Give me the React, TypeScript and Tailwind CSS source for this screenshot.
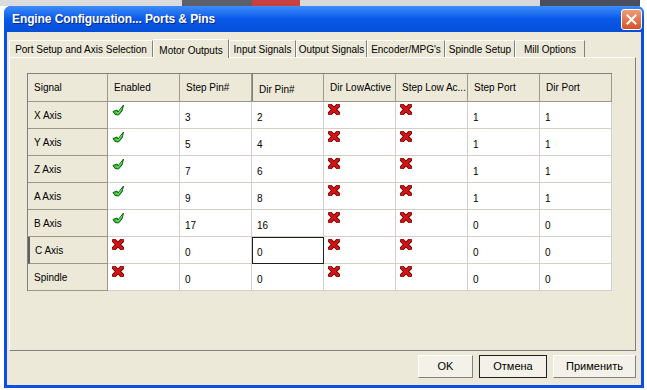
import { FC } from "react";

const tabs = [
	{ label: "Port Setup and Axis Selection", w: "w-[144px]" },
	{ label: "Motor Outputs", w: "w-[76px]", active: true },
	{ label: "Input Signals", w: "w-[67px]" },
	{ label: "Output Signals", w: "w-[71px]" },
	{ label: "Encoder/MPG's", w: "w-[78px]" },
	{ label: "Spindle Setup", w: "w-[70px]" },
	{ label: "Mill Options", w: "w-[70px]" },
];

const headers = [
	"Signal",
	"Enabled",
	"Step Pin#",
	"Dir Pin#",
	"Dir LowActive",
	"Step Low Ac...",
	"Step Port",
	"Dir Port",
];

type Row = [string, boolean, string, string, boolean, boolean, string, string];

const rows: Row[] = [
	["X Axis", true, "3", "2", false, false, "1", "1"],
	["Y Axis", true, "5", "4", false, false, "1", "1"],
	["Z Axis", true, "7", "6", false, false, "1", "1"],
	["A Axis", true, "9", "8", false, false, "1", "1"],
	["B Axis", true, "17", "16", false, false, "0", "0"],
	["C Axis", false, "0", "0", false, false, "0", "0"],
	["Spindle", false, "0", "0", false, false, "0", "0"],
];

// green "enabled" flag, a wedge-like tick
const Check = () => (
	<svg width="13" height="12" viewBox="0 0 13 12">
		<polygon
			points="1,7.5 5,6 6,8 11.5,1 10,7 6.5,11 3,10.5"
			fill="#32c032"
			stroke="#0e5e0e"
			strokeWidth="1"
			strokeLinejoin="round"
		/>
		<path d="M4 8 L6 9.5 L10 4" stroke="#8ae88a" strokeWidth="0.8" fill="none" />
	</svg>
);

// red bold "disabled" cross
const Cross = () => (
	<svg width="12" height="11" viewBox="0 0 12 11">
		<path
			d="M2.2 1.8 L9.8 9.2 M9.8 1.8 L2.2 9.2"
			stroke="#5a0606"
			strokeWidth="4.6"
			strokeLinecap="square"
		/>
		<path
			d="M2.2 1.8 L9.8 9.2 M9.8 1.8 L2.2 9.2"
			stroke="#d41414"
			strokeWidth="3"
			strokeLinecap="square"
		/>
	</svg>
);

const Flag: FC<{ on: boolean }> = ({ on }) => (
	<div className="h-[27px] bg-white border-r border-b border-[#d4d0c8] pl-[4px] pt-[2px]">
		{on ? <Check /> : <Cross />}
	</div>
);

const Cell: FC<{ text: string; focus?: boolean }> = ({ text, focus }) => (
	<div
		className={
			focus
				? "h-[27px] bg-white border border-[#202020] flex items-center pl-[4px] pt-[3px]"
				: "h-[27px] bg-white border-r border-b border-[#d4d0c8] flex items-center pl-[5px] pt-[4px]"
		}
	>
		{text}
	</div>
);

const App: FC = () => {
	return (
		<div className="w-[647px] h-[390px] bg-white overflow-hidden flex flex-col font-['Liberation_Sans',Arial,sans-serif] text-[10px] text-black">
			<div className="h-[6px] flex">
				<div className="w-[182px] bg-[#dcdcdc]" />
				<div className="w-[70px] bg-[#5c5e6a]" />
				<div className="w-[48px] bg-[#c84040]" />
				<div className="w-[240px] bg-[#d8d8d8]" />
				<div className="w-[100px] bg-[#4a4f60]" />
			</div>
			<div className="ml-[4px] w-[640px] h-[382px] rounded-t-[7px] bg-[#0a4ee4] px-[3px] pb-[3px] flex flex-col">
				<div className="h-[26px] flex items-center justify-between bg-gradient-to-b from-[#3d8cf8] via-[#0a58ea] to-[#0650d8] -mx-[3px] px-[8px] rounded-t-[7px]">
					<span className="text-white font-bold text-[12px] tracking-[-0.1px] [text-shadow:1px_1px_0_#0a2a80]">
						Engine Configuration... Ports &amp; Pins
					</span>
					<div className="w-[21px] h-[21px] rounded-[3px] border border-white bg-gradient-to-b from-[#ef9a78] to-[#d45226] flex items-center justify-center -mr-[6px]">
						<svg width="11" height="11" viewBox="0 0 11 11">
							<path d="M1.5 1.5 L9.5 9.5 M9.5 1.5 L1.5 9.5" stroke="white" strokeWidth="2" strokeLinecap="square" />
						</svg>
					</div>
				</div>
				<div className="flex-1 bg-[#ece9d8] flex flex-col px-[2px] pt-[6px]">
					<div className="h-[19px] flex items-end">
						{tabs.map((t) =>
							t.active ? (
								<div
									key={t.label}
									className={`${t.w} h-[19px] -mb-px z-10 bg-[#ece9d8] border-t border-l border-white border-r border-r-[#808080] flex items-start justify-center pt-[3px]`}
								>
									{t.label}
								</div>
							) : (
								<div
									key={t.label}
									className={`${t.w} h-[17px] bg-[#ece9d8] border-t border-l border-white border-r border-r-[#808080] flex items-center justify-center`}
								>
									{t.label}
								</div>
							)
						)}
					</div>
					<div className="w-[627px] h-[294px] border-t border-l border-white border-r border-b border-r-[#808080] border-b-[#808080] pl-[17px] pt-[15px]">
						<div className="w-[585px] grid grid-cols-[80px_repeat(7,72px)] border-l border-t border-[#808080]">
							{headers.map((h, i) => (
								<div
									key={h}
									className={
										i === 3
											? "h-[28px] bg-[#ece9d8] border-r border-b border-[#9c9888] border-l border-l-[#808080] flex items-center pl-[6px] pt-[3px]"
											: "h-[28px] bg-[#ece9d8] border-r border-b border-[#9c9888] flex items-center pl-[6px]"
									}
								>
									{h}
								</div>
							))}
							{rows.map((r) => (
								<div key={r[0]} className="contents">
									<div
										className={
											r[0] === "C Axis"
												? "h-[27px] bg-[#ece9d8] border-r border-b border-[#9c9888] border-l-2 border-l-[#606060] flex items-center pl-[5px]"
												: "h-[27px] bg-[#ece9d8] border-r border-b border-[#9c9888] flex items-center pl-[6px]"
										}
									>
										{r[0]}
									</div>
									<Flag on={r[1]} />
									<Cell text={r[2]} />
									<Cell text={r[3]} focus={r[0] === "C Axis"} />
									<Flag on={r[4]} />
									<Flag on={r[5]} />
									<Cell text={r[6]} />
									<Cell text={r[7]} />
								</div>
							))}
						</div>
					</div>
					<div className="flex justify-end gap-[6px] pt-[4px] pr-[3px]">
						<button className="w-[55px] h-[23px] bg-[#f4f2e8] border border-t-white border-l-white border-r-[#808080] border-b-[#808080] text-[11px]">
							OK
						</button>
						<button className="w-[68px] h-[23px] bg-[#f4f2e8] border border-[#202020] text-[11px]">
							Отмена
						</button>
						<button className="w-[83px] h-[23px] bg-[#f4f2e8] border border-t-white border-l-white border-r-[#808080] border-b-[#808080] text-[11px]">
							Применить
						</button>
					</div>
				</div>
			</div>
		</div>
	);
};

export default App;
